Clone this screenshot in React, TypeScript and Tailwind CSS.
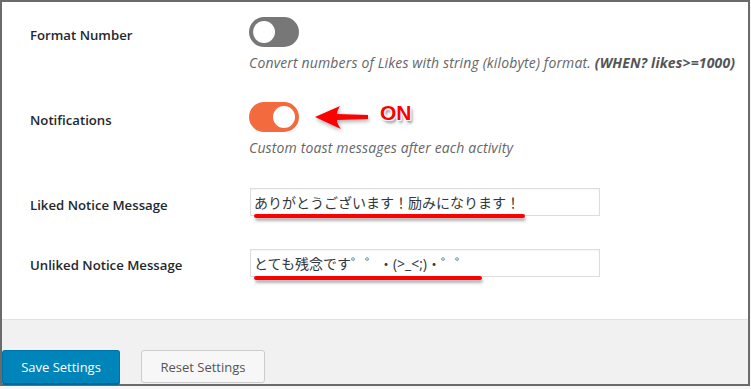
import React from 'react';

const font = "font-['Open_Sans','Noto_Sans_CJK_JP',sans-serif]";
const label = 'w-[247px] shrink-0 pl-[28px] text-[13.2px] leading-5 font-semibold text-[#23282d]';
const desc = 'mt-[6px] text-[14px] leading-5 italic tracking-[0.15px] text-[#666]';

function Toggle({ on }: { on: boolean }) {
  return (
    <div
      className={`flex h-[30px] w-[50px] shrink-0 items-center rounded-full px-[4px] ${
        on ? 'justify-end bg-[#f26a3d]' : 'justify-start bg-[#777777]'
      }`}
    >
      <div className="h-[22px] w-[22px] rounded-full bg-white" />
    </div>
  );
}

function Arrow() {
  return (
    <svg width="54" height="26" viewBox="0 0 54 26" className="drop-shadow-[1px_2px_2px_rgba(0,0,0,0.35)]">
      <path d="M0 12 L25 1 Q22 6 22 9 L53 10 L53 14 L22 15 Q22 19 26 24 Z" fill="#ff0000" />
    </svg>
  );
}

function Underline({ width, top }: { width: string; top: string }) {
  return (
    <div
      className={`pointer-events-none absolute left-[4px] h-[4px] rounded-full bg-[#ff0000] shadow-[1px_3px_3px_rgba(0,0,0,0.3)] ${width} ${top}`}
    />
  );
}

export default function App() {
  return (
    <div className={`h-[389px] w-[751px] bg-[#f7f7f7] ${font}`}>
      <div className="flex h-[386px] w-[750px] flex-col border-2 border-[#6b6b6b]">
        {/* settings table */}
        <div className="h-[317px] bg-white pt-[15px]">
          {/* Format Number */}
          <div className="flex">
            <div className={`${label} pt-[8px]`}>Format Number</div>
            <div>
              <Toggle on={false} />
              <p className={desc}>
                Convert numbers of Likes with string (kilobyte) format.{' '}
                <b className="font-bold text-[#555]">(WHEN? likes&gt;=1000)</b>
              </p>
            </div>
          </div>

          {/* Notifications */}
          <div className="mt-[29px] flex">
            <div className={`${label} pt-[8px]`}>Notifications</div>
            <div>
              <div className="flex items-center">
                <Toggle on={true} />
                <div className="ml-[16px] mt-[2px]">
                  <Arrow />
                </div>
                <span className="ml-[11px] -mt-[8px] font-['Liberation_Sans',sans-serif] text-[21px] leading-6 font-bold text-[#ff0000] [text-shadow:1px_0_0_#fff,-1px_0_0_#fff,0_1px_0_#fff,0_-1px_0_#fff,1px_1px_0_#fff,-1px_-1px_0_#fff,1px_-1px_0_#fff,-1px_1px_0_#fff,2px_3px_3px_rgba(0,0,0,0.45)]">
                  ON
                </span>
              </div>
              <p className={desc}>Custom toast messages after each activity</p>
            </div>
          </div>

          {/* Liked Notice Message */}
          <div className="mt-[30px] flex">
            <div className={`${label} pt-[7px]`}>Liked Notice Message</div>
            <div className="relative ml-px">
              <input
                readOnly
                value="ありがとうございます！励みになります！"
                className="h-[28px] w-[350px] border border-[#dddddd] bg-white px-[3px] text-[14px] text-[#32373c] shadow-[inset_0_1px_2px_rgba(0,0,0,0.04)] outline-none"
              />
              <Underline width="w-[271px]" top="top-[26px]" />
            </div>
          </div>

          {/* Unliked Notice Message */}
          <div className="mt-[33px] flex">
            <div className={`${label} pt-[6px]`}>Unliked Notice Message</div>
            <div className="relative ml-px">
              <input
                readOnly
                value="とても残念です゜゜・(>_<;)・゜゜"
                className="h-[28px] w-[350px] border border-[#dddddd] bg-white px-[3px] text-[14px] text-[#32373c] shadow-[inset_0_1px_2px_rgba(0,0,0,0.04)] outline-none"
              />
              <Underline width="w-[228px]" top="top-[27px]" />
            </div>
          </div>
        </div>

        {/* footer */}
        <div className="flex flex-1 items-end gap-[21px] border-t border-[#e2e2e2] bg-[#f1f1f1]">
          <button className="h-[34px] w-[118px] rounded-[3px] border border-[#0073aa] border-b-[#006799] bg-[#0085ba] pt-[2px] text-[13px] text-white shadow-[0_1px_0_#006799]">
            Save Settings
          </button>
          <button className="mb-px h-[33px] w-[124px] rounded-[3px] border border-[#cccccc] bg-[#f7f7f7] pt-[3px] text-[13px] text-[#555]">
            Reset Settings
          </button>
        </div>
      </div>
    </div>
  );
}
